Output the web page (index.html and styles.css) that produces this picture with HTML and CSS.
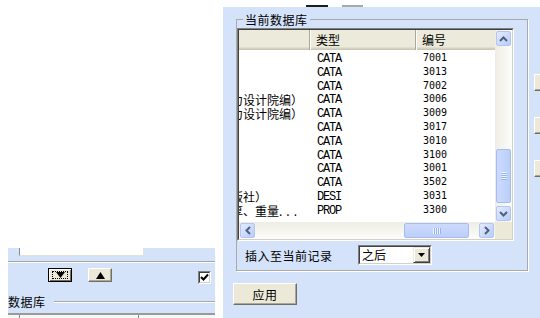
FILE: index.html
```html
<!DOCTYPE html>
<html>
<head>
<meta charset="utf-8">
<link rel="stylesheet" href="styles.css">
</head>
<body>
<div class="page">
  <div class="leftcol">
    <div class="lp">
      <div class="tbstub"></div>
      <div class="sep"></div>
      <div class="btnrow">
        <button class="sb def dn"><span class="focus"><svg width="9" height="6" viewBox="0 0 9 6"><polygon points="0,0 9,0 4.5,6" fill="#000"/></svg></span></button>
        <button class="sb up"><svg width="9" height="7" viewBox="0 0 9 7"><polygon points="4.5,0 9,7 0,7" fill="#000"/></svg></button>
        <span class="chk"><span class="chk-in"><svg width="9" height="9" viewBox="0 0 9 9"><polyline points="1,4 3.5,6.5 8,1.5" fill="none" stroke="#000" stroke-width="2"/></svg></span></span>
      </div>
      <div class="grp2"><span class="glabel">数据库</span><span class="gline"></span></div>
      <div class="lv2"><span class="tick"></span><span class="tick t2"></span></div>
    </div>
  </div>
  <div class="rightcol">
    <div class="topstrip"><span class="bar dark"></span><span class="bar gray"></span></div>
    <div class="rp">
      <div class="main">
        <fieldset class="grp">
          <legend>当前数据库</legend>
          <div class="lv">
            <div class="lv-in">
              <div class="view">
                <div class="scroller">
                  <div class="head">
                    <div class="hc c1"></div>
                    <div class="hc c2">类型</div>
                    <div class="hc c3">编号</div>
                  </div>
                  <div class="rows">
                    <div class="r"><span class="c1"></span><span class="c2">CATA</span><span class="c3">7001</span></div>
                    <div class="r"><span class="c1"></span><span class="c2">CATA</span><span class="c3">3013</span></div>
                    <div class="r"><span class="c1"></span><span class="c2">CATA</span><span class="c3">7002</span></div>
                    <div class="r"><span class="c1">力设计院编）</span><span class="c2">CATA</span><span class="c3">3006</span></div>
                    <div class="r"><span class="c1">力设计院编）</span><span class="c2">CATA</span><span class="c3">3009</span></div>
                    <div class="r"><span class="c1"></span><span class="c2">CATA</span><span class="c3">3017</span></div>
                    <div class="r"><span class="c1"></span><span class="c2">CATA</span><span class="c3">3010</span></div>
                    <div class="r"><span class="c1"></span><span class="c2">CATA</span><span class="c3">3100</span></div>
                    <div class="r"><span class="c1"></span><span class="c2">CATA</span><span class="c3">3001</span></div>
                    <div class="r"><span class="c1"></span><span class="c2">CATA</span><span class="c3">3502</span></div>
                    <div class="r"><span class="c1">版社）</span><span class="c2">DESI</span><span class="c3">3031</span></div>
                    <div class="r"><span class="c1">厚、重量<span class="ell">...</span></span><span class="c2">PROP</span><span class="c3">3300</span></div>
                  </div>
                </div>
              </div>
              <div class="vs">
                <span class="sarrow"><i><svg width="9" height="6" viewBox="0 0 9 6"><polyline points="1,5 4.5,1.5 8,5" fill="none" stroke="#4d6185" stroke-width="2"/></svg></i></span>
                <span class="vtrack"><span class="vthumb"><span class="vgrip"></span></span></span>
                <span class="sarrow"><i><svg width="9" height="6" viewBox="0 0 9 6"><polyline points="1,1 4.5,4.5 8,1" fill="none" stroke="#4d6185" stroke-width="2"/></svg></i></span>
              </div>
              <div class="hs">
                <span class="sarrow"><i><svg width="6" height="9" viewBox="0 0 6 9"><polyline points="5,1 1.5,4.5 5,8" fill="none" stroke="#4d6185" stroke-width="2"/></svg></i></span>
                <span class="htrack"><span class="hthumb"><span class="hgrip"></span></span></span>
                <span class="sarrow"><i><svg width="6" height="9" viewBox="0 0 6 9"><polyline points="1,1 4.5,4.5 1,8" fill="none" stroke="#4d6185" stroke-width="2"/></svg></i></span>
              </div>
              <div class="corner"></div>
            </div>
          </div>
          <div class="ins">
            <span class="ins-label">插入至当前记录</span>
            <span class="combo"><span class="combo-in"><span class="combo-text">之后</span><span class="combo-btn"><svg width="7" height="4" viewBox="0 0 7 4"><polygon points="0,0 7,0 3.5,4" fill="#000"/></svg></span></span></span>
          </div>
        </fieldset>
        <button class="apply">应用</button>
      </div>
      <div class="side">
        <span class="sbtn"></span>
        <span class="sbtn"></span>
        <span class="sbtn"></span>
      </div>
    </div>
  </div>
</div>
</body>
</html>
```

FILE: styles.css
```css
* { box-sizing: border-box; }
html, body { margin: 0; padding: 0; background: #fff; }
body {
  width: 540px; height: 318px; overflow: hidden;
  font-family: "Noto Sans CJK SC", "Liberation Sans", sans-serif;
  font-size: 12px; color: #000;
}
.page { display: flex; width: 540px; height: 318px; }

/* ---------- left column ---------- */
.leftcol { width: 223px; flex: none; display: flex; flex-direction: column; padding-top: 248px; }
.lp {
  margin-left: 8px; width: 207px; flex: 1;
  background: #d4e2fa; overflow: hidden;
  display: flex; flex-direction: column;
}
.tbstub {
  flex: none; margin-left: 11px; width: 125px; height: 8px; background: #fff;
  border-left: 1px solid #8c8c8c; border-right: 1px solid #e4e1d0; border-bottom: 1px solid #e4e1d0;
}
.sep { flex: none; margin-top: 5px; height: 2px; border-top: 1px solid #a5a5a5; border-bottom: 1px solid #fff; }
.btnrow { flex: none; margin-top: 5px; height: 16px; display: flex; align-items: flex-start; }
.sb {
  appearance: none; margin: 0; padding: 0; font: inherit;
  width: 24px; height: 14px; background: #ece9d8;
  border: 1px solid; border-color: #fff #716f64 #716f64 #fff;
  box-shadow: inset -1px -1px 0 #aca899;
  display: flex; align-items: center; justify-content: center;
}
.sb.dn { margin-left: 40px; border: 1px solid #000; box-shadow: inset 1px 1px 0 #fff, inset -1px -1px 0 #716f64; }
.sb.up { margin-left: 16px; }
.focus {
  width: 16px; height: 8px; border: 1px dotted #000;
  display: flex; align-items: center; justify-content: center;
}
.chk {
  margin-left: 86px; margin-top: 3px; width: 13px; height: 13px;
  border: 1px solid; border-color: #808080 #fff #fff #808080;
}
.chk-in {
  display: flex; align-items: center; justify-content: center;
  width: 100%; height: 100%; background: #fff;
  border: 1px solid; border-color: #404040 #d4d0c8 #d4d0c8 #404040;
}
.grp2 { flex: none; margin-top: 10px; height: 15px; display: flex; align-items: center; }
.glabel { line-height: 15px; letter-spacing: 0.5px; }
.gline { flex: 1; margin-left: 8px; height: 2px; border-top: 1px solid #a8a8a8; border-bottom: 1px solid #fff; }
.lv2 {
  flex: 1; margin-top: 4px; background: #f7f7f3;
  border-top: 2px solid #9a9a9a; display: flex; align-items: flex-start;
}
.tick { width: 1px; height: 4px; background: #8a8a8a; margin-left: 11px; }
.tick.t2 { margin-left: 118px; }

/* ---------- right column ---------- */
.rightcol { width: 317px; flex: none; display: flex; flex-direction: column; }
.topstrip { flex: none; height: 7px; display: flex; align-items: flex-end; padding-left: 83px; gap: 14px; }
.bar { height: 2px; width: 22px; }
.bar.dark { background: #1e1e1e; }
.bar.gray { background: #a9a9a9; width: 21px; }
.rp { flex: 1; background: #d4e2fa; display: flex; overflow: hidden; padding: 5px 0 0 10px; }
.main { width: 295px; flex: none; display: flex; flex-direction: column; align-items: flex-start; }

.grp {
  margin: 0 0 0 3px; padding: 1px 0 5px 0; min-width: 0; width: 292px;
  border: 1px solid #a9a9a9; box-shadow: 1px 1px 0 #fff;
}
.grp legend { margin-left: 6px; padding: 0 2px; line-height: 15px; letter-spacing: 0.5px; }

.lv {
  width: 277px; height: 213px;
  border: 1px solid; border-color: #808080 #fff #fff #808080;
}
.lv-in {
  width: 100%; height: 100%;
  border: 1px solid; border-color: #404040 #d4d0c8 #d4d0c8 #404040;
  display: grid; grid-template-columns: 256px 17px; grid-template-rows: 192px 17px;
}
.view { overflow: hidden; background: #fff; }
.scroller { margin-left: -14px; width: 300px; }
.head {
  display: flex; height: 20px; background: #ebeadb;
  box-shadow: inset 0 -1px 0 #cbc7b8, inset 0 -2px 0 #d6d2c2, inset 0 -3px 0 #e2decd;
}
.hc { line-height: 19px; padding-left: 5px; white-space: nowrap; overflow: hidden; }
.hc.c1 { width: 85px; border-right: 1px solid #aca899; }
.hc.c2 { width: 106px; border-left: 1px solid #fff; border-right: 1px solid #aca899; }
.hc.c3 { flex: 1; border-left: 1px solid #fff; }
.rows { padding-top: 1px; }
.r { display: flex; height: 13.8px; line-height: 13.8px; white-space: nowrap; }
.r .c1 { width: 85px; padding-left: 6px; padding-top: 1px; overflow: hidden; }
.r .c2 { width: 106px; padding-left: 7px; padding-top: 2px; font-family: "Liberation Mono", monospace; font-size: 12px; letter-spacing: -1.2px; }
.r .c3 { padding-left: 7px; font-family: "DejaVu Sans Mono", monospace; font-size: 10px; }
.ell { letter-spacing: 4px; }

.vs {
  grid-column: 2; grid-row: 1; display: flex; flex-direction: column;
  background: linear-gradient(to right, #eeede5, #fdfdfa);
}
.hs {
  grid-column: 1; grid-row: 2; display: flex;
  background: linear-gradient(to bottom, #eeede5, #fdfdfa);
}
.corner { grid-column: 2; grid-row: 2; background: #ece9d8; }
.sarrow { flex: none; width: 17px; height: 17px; padding: 1px; display: flex; }
.sarrow i {
  flex: 1; display: flex; align-items: center; justify-content: center;
  border: 1px solid #b2c5f3; border-radius: 2px;
  background: linear-gradient(135deg, #e3ebfe, #b9ccf8);
}
.vtrack { flex: 1; padding: 102px 1px 0 1px; display: flex; flex-direction: column; }
.vthumb, .hthumb {
  display: flex; align-items: center; justify-content: center;
  border: 1px solid #a6bcf1; border-radius: 2px;
  background: linear-gradient(to right, #cddafd, #bccff9);
}
.vthumb { height: 54px; }
.vgrip { width: 6px; height: 8px; background: repeating-linear-gradient(to bottom, #eef3fe 0 1px, #95b3f5 1px 2px); }
.htrack { flex: 1; padding: 1px 0 1px 148px; display: flex; }
.hthumb { width: 65px; background: linear-gradient(to bottom, #cddafd, #bccff9); }
.hgrip { width: 8px; height: 6px; background: repeating-linear-gradient(to right, #eef3fe 0 1px, #95b3f5 1px 2px); }

.ins { margin-top: 4px; height: 20px; display: flex; align-items: center; padding-left: 8px; }
.ins-label { width: 113px; letter-spacing: 0.5px; }
.combo {
  width: 74px; height: 20px; background: #fff;
  border: 1px solid; border-color: #808080 #fff #fff #808080;
}
.combo-in {
  display: flex; width: 100%; height: 100%;
  border: 1px solid; border-color: #404040 #d4d0c8 #d4d0c8 #404040;
}
.combo-text { flex: 1; padding-left: 2px; line-height: 16px; }
.combo-btn {
  width: 17px; height: 16px; background: #ece9d8;
  border: 1px solid; border-color: #ece9d8 #404040 #404040 #ece9d8;
  box-shadow: inset 1px 1px 0 #fff, inset -1px -1px 0 #808080;
  display: flex; align-items: center; justify-content: center;
}

.apply {
  appearance: none; margin: 12px 0 0 0; padding: 0; font: inherit; letter-spacing: 0.5px;
  width: 64px; height: 22px; background: #ece9d8; color: #000;
  border: 1px solid; border-color: #fff #716f64 #716f64 #fff;
  box-shadow: inset -1px -1px 0 #aca899;
}
.side { flex: none; margin-left: 6px; padding-top: 62px; display: flex; flex-direction: column; gap: 26px; }
.sbtn {
  width: 60px; height: 17px; background: #ece9d8;
  border: 1px solid; border-color: #fff #716f64 #716f64 #fff;
  box-shadow: inset -1px -1px 0 #aca899;
}
```
